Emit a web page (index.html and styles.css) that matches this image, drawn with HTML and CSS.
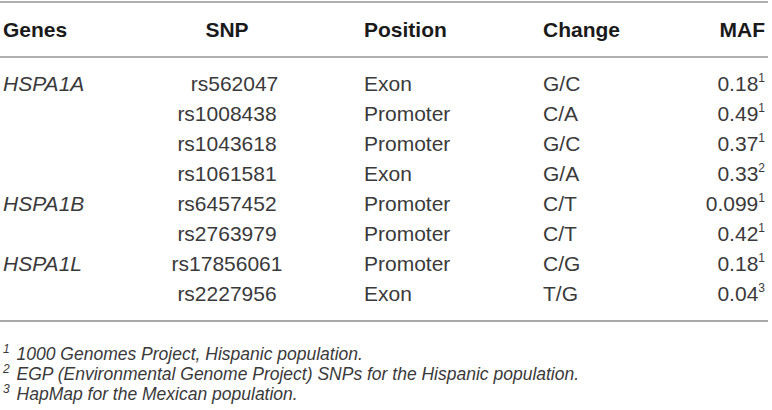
FILE: index.html
```html
<!DOCTYPE html>
<html>
<head>
<meta charset="utf-8">
<link rel="stylesheet" href="styles.css">
</head>
<body>
<div class="wrap">
  <div class="grid head">
    <div class="c1">Genes</div>
    <div class="c2">SNP</div>
    <div class="c3">Position</div>
    <div class="c4">Change</div>
    <div class="c5">MAF</div>
  </div>
  <div class="grid body">
    <div class="c1 gene">HSPA1A</div><div class="c2 shift">rs562047</div><div class="c3">Exon</div><div class="c4">G/C</div><div class="c5">0.18<sup>1</sup></div>
    <div class="c1"></div><div class="c2">rs1008438</div><div class="c3">Promoter</div><div class="c4">C/A</div><div class="c5">0.49<sup>1</sup></div>
    <div class="c1"></div><div class="c2">rs1043618</div><div class="c3">Promoter</div><div class="c4">G/C</div><div class="c5">0.37<sup>1</sup></div>
    <div class="c1"></div><div class="c2">rs1061581</div><div class="c3">Exon</div><div class="c4">G/A</div><div class="c5">0.33<sup>2</sup></div>
    <div class="c1 gene">HSPA1B</div><div class="c2">rs6457452</div><div class="c3">Promoter</div><div class="c4">C/T</div><div class="c5">0.099<sup>1</sup></div>
    <div class="c1"></div><div class="c2">rs2763979</div><div class="c3">Promoter</div><div class="c4">C/T</div><div class="c5">0.42<sup>1</sup></div>
    <div class="c1 gene">HSPA1L</div><div class="c2">rs17856061</div><div class="c3">Promoter</div><div class="c4">C/G</div><div class="c5">0.18<sup>1</sup></div>
    <div class="c1"></div><div class="c2">rs2227956</div><div class="c3">Exon</div><div class="c4">T/G</div><div class="c5">0.04<sup>3</sup></div>
  </div>
  <div class="notes">
    <p><sup>1</sup> 1000 Genomes Project, Hispanic population.</p>
    <p><sup>2</sup> EGP (Environmental Genome Project) SNPs for the Hispanic population.</p>
    <p><sup>3</sup> HapMap for the Mexican population.</p>
  </div>
</div>
</body>
</html>
```
FILE: styles.css
```css
html, body {
  margin: 0;
  padding: 0;
  background: #fff;
}
body {
  font-family: "Liberation Sans", Arial, sans-serif;
  color: #2b2b2b;
}
.wrap {
  width: 768px;
  padding-top: 1px;
}
.grid {
  display: grid;
  grid-template-columns: 150px 154px 239px 125px 100px;
  font-size: 21px;
}
.head {
  border-top: 2px solid #b0b0b0;
  border-bottom: 2px solid #b0b0b0;
  font-weight: bold;
  color: #1a1a1a;
  height: 53px;
  align-items: center;
}
.body {
  padding: 11px 0 11px;
  border-bottom: 2px solid #a8a8a8;
  grid-auto-rows: 30px;
  align-items: center;
  color: #3a3a3a;
}
.c1 { padding-left: 3px; }
.c2 { text-align: center; }
.c3 { padding-left: 60px; }
.c5 { text-align: right; padding-right: 3px; }
.gene { font-style: italic; }
.shift { padding-left: 15px; }
.body sup {
  font-size: 12px;
  line-height: 0;
  vertical-align: 0;
  position: relative;
  top: -9px;
}
.notes {
  padding-top: 22px;
  font-size: 17.5px;
  font-style: italic;
  color: #3a3a3a;
}
.notes p {
  margin: 0;
  padding-left: 3px;
  line-height: 20px;
}
.notes sup {
  font-size: 12px;
  line-height: 0;
  vertical-align: 0;
  position: relative;
  top: -7px;
  margin-right: 2px;
}
```
